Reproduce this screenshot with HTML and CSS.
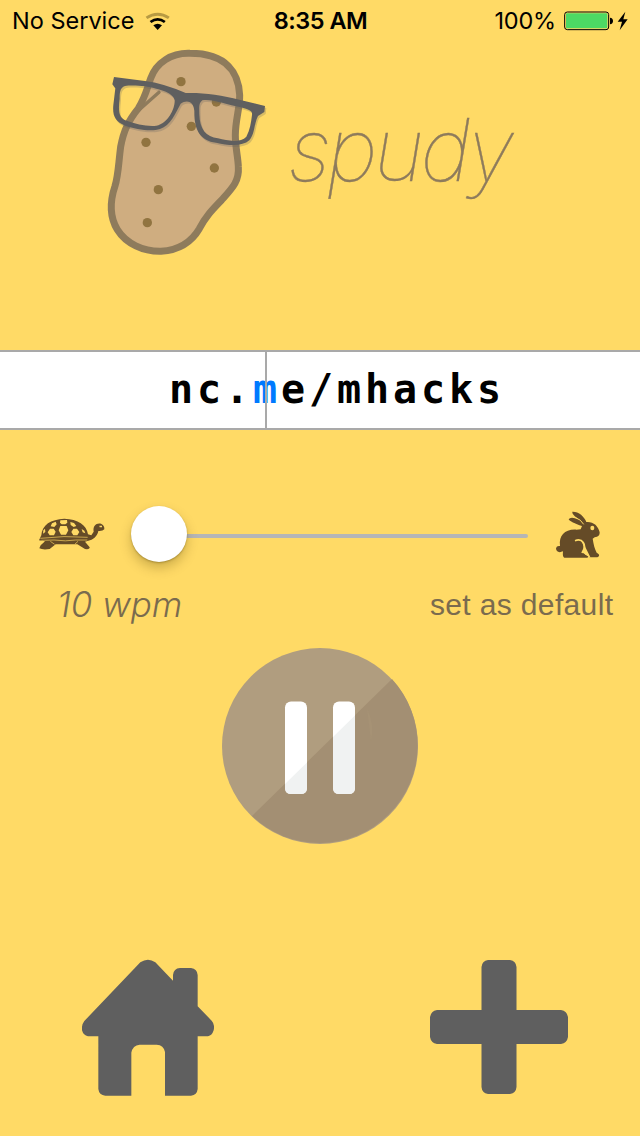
FILE: index.html
```html
<!DOCTYPE html>
<html lang="en">
<head>
<meta charset="utf-8">
<title>spudy</title>
<link rel="stylesheet" href="styles.css">
</head>
<body>
<main class="screen">
  <div class="status">
    <div class="status-left">
      <span class="carrier">No Service</span>
      <svg class="wifi" viewBox="0 0 75 57"><path d="M2 14Q38-9 74 14L69 21Q38 2 7 21Z" fill="#b79a42"/><path d="M14 27Q38 9 62 27L57 33Q38 20 19 33Z"/><path d="M25 40Q38 31 51 40L38 54Z"/></svg>
    </div>
    <span class="clock">8:35 AM</span>
    <div class="status-right">
      <span class="percent">100%</span>
      <svg class="battery" viewBox="0 0 195 60"><rect x="2" y="3" width="132" height="53" rx="8" fill="none" stroke="#000" stroke-width="3"/><rect x="6" y="7" width="124" height="45" rx="3" fill="#4cd964"/><path d="M138 20Q147 21 147 30Q147 39 138 40Z"/><path d="M184 2L161 32H174L167 58L191 25H178Z"/></svg>
    </div>
  </div>

  <header class="brand">
    <svg class="potato" viewBox="0 0 540 675">
      <path d="M285 40C230 38 184 67 167 115C154 151 152 168 130 205C100 242 86 272 77 320C70 375 70 405 60 438C44 486 44 531 67 569C93 611 145 635 198 634C250 630 288 609 313 566C334 527 352 509 380 480C412 444 433 424 430 380C429 350 421 323 421 286C421 240 435 203 434 165C431 101 397 40 285 40Z" fill="#cfad80" stroke="#8e7b5c" stroke-width="21"/>
      <path d="M192 157L132 210" stroke="#8e7b5c" stroke-width="10" stroke-linecap="round"/>
      <g fill="#917440"><circle cx="258" cy="125" r="14"/><circle cx="364" cy="186" r="14"/><circle cx="289" cy="259" r="14"/><circle cx="153" cy="307" r="14"/><circle cx="358" cy="384" r="14"/><circle cx="190" cy="449" r="14"/><circle cx="157" cy="548" r="14"/></g>
      <path class="frame-shadow" transform="translate(4 6)" fill-rule="evenodd" d="M57 111L150 123Q205 130 272 159C320 157 380 165 433 179L510 198L508 216L489 228C477 250 480 282 463 301C443 319 405 318 363 308C316 302 297 270 298 213C296 182 274 179 257 191C241 220 227 256 195 267C167 276 122 267 91 257C60 246 52 226 55 195L61 145L52 133ZM90 138C74 143 74 160 74 176C70 208 69 234 95 242C123 252 155 260 184 257C220 249 240 205 239 181C235 155 180 145 151 139C126 136 103 136 90 138ZM322 181C310 190 313 205 313 222C314 268 333 291 369 295C401 304 438 308 454 290C465 270 468 248 471 225C473 213 464 210 437 202C397 193 344 175 322 181Z"/>
      <path class="frame" fill-rule="evenodd" d="M57 111L150 123Q205 130 272 159C320 157 380 165 433 179L510 198L508 216L489 228C477 250 480 282 463 301C443 319 405 318 363 308C316 302 297 270 298 213C296 182 274 179 257 191C241 220 227 256 195 267C167 276 122 267 91 257C60 246 52 226 55 195L61 145L52 133ZM90 138C74 143 74 160 74 176C70 208 69 234 95 242C123 252 155 260 184 257C220 249 240 205 239 181C235 155 180 145 151 139C126 136 103 136 90 138ZM322 181C310 190 313 205 313 222C314 268 333 291 369 295C401 304 438 308 454 290C465 270 468 248 471 225C473 213 464 210 437 202C397 193 344 175 322 181Z"/>
    </svg>
    <h1 class="title">spudy</h1>
  </header>

  <section class="reader"><p class="word">nc.<span class="focus">m</span>e/mhacks</p></section>

  <section class="speed">
    <svg class="turtle" viewBox="0 0 228 138">
      <path fill="#654b27" d="M22 76C24 44 50 28 91 26C132 27 158 45 162 73L172 76L179 65C176 47 187 38 201 41Q212 46 211 58Q206 64 193 63C190 80 176 90 163 92L153 95L167 112Q168 119 153 117L130 103H65L47 117Q26 120 16 115L20 106L33 94L15 91Z"/>
      <g fill="#ffda66"><path d="M79 31L99 30L100 38L94 43H83L78 38ZM79 48H98L103 61L96 74H81L74 61ZM54 40L65 35L68 43L61 51L50 49ZM109 36L120 39L127 48L119 51L110 45ZM48 56H59L65 65L60 76H47L41 67ZM118 56H129L136 66L130 76H118L112 66Z"/><path d="M28 61L33 56L34 66L27 71ZM143 57L151 62L154 70L146 67ZM196 47L204 47V52H197Z"/></g>
      <path d="M19 85Q90 76 161 82M22 91L60 90Q96 95 125 90H160M49 94L62 103M132 94L121 104" fill="none" stroke="#dcb855" stroke-width="2.5"/>
    </svg>
    <div class="slider"><div class="track"></div><div class="thumb"></div></div>
    <svg class="rabbit" viewBox="0 0 168 174">
      <path fill="#654b27" d="M67 20C85 19 103 34 109 51C129 49 145 62 149 82Q150 95 134 97L128 101C131 119 134 132 140 143C151 148 149 156 139 157H119L105 132Q101 150 110 151Q120 157 111 158H43Q37 156 39 139C26 145 18 139 18 130Q20 121 30 123C26 91 45 72 79 74L92 73L96 63C75 57 58 48 56 43Q61 34 86 43C76 34 66 28 67 20Z"/>
      <ellipse cx="127" cy="69" rx="6" ry="7" fill="#ffda66"/>
      <path d="M75 107C98 98 110 120 99 138L96 144" fill="none" stroke="#ffda66" stroke-width="5"/>
      <path d="M98 110L122 158L108 150L98 143Q105 125 94 109Z" fill="#ffda66"/>
      <path d="M76 38Q93 43 101 58" fill="none" stroke="#ffda66" stroke-width="3"/>
    </svg>
  </section>
  <div class="labels"><span class="wpm">10 wpm</span><span class="default">set as default</span></div>

  <div class="playback">
    <svg class="pause" viewBox="0 0 196 196">
      <circle cx="98" cy="98" r="98" fill="#b09d7f"/>
      <path d="M30 168L170 31A98 98 0 0 1 30 168Z" fill="#a38f73"/>
      <path d="M145 60Q153 78 149 93Z" fill="#a69275"/>
      <rect x="63" y="53.500" width="22" height="92.500" rx="6" fill="#fff"/><rect x="111" y="53.500" width="22" height="92.500" rx="6" fill="#fff"/>
      <path d="M63 136L85 114.500V140Q85 146 79 146H69Q63 146 63 140ZM111 89L133 67.500V140Q133 146 127 146H117Q111 146 111 140Z" fill="#f0f2f2"/>
    </svg>
  </div>

  <nav class="actions">
    <svg class="home" viewBox="36 28 396 411"><path fill="#5f5f5f" d="M211 38Q234 22 256 38L309 93V76Q311 56 330 55H363Q382 58 383 76V170L425 213Q435 224 431 242Q426 258 414 260H383V418Q381 436 363 438H285V307Q281 286 260 285H209Q188 287 184 309V438H106Q87 436 85 418V260H54Q40 257 36 242Q34 226 43 214Z"/></svg>
    <svg class="plus" viewBox="0 0 138 134"><path fill="#5f5f5f" d="M58 0H80Q86 1 86.500 7V50H131Q137 51 138 57V77Q137 83 131 84H86.500V127Q86 133 80 134H58Q52 133 51.500 127V84H7Q1 83 0 77V57Q1 51 7 50H51.500V7Q52 1 58 0Z"/></svg>
  </nav>
</main>
</body>
</html>
```
FILE: styles.css
```css
* { box-sizing: border-box; }
body { margin: 0; }
.screen { width: 640px; height: 1136px; background: #ffda66; display: flex; flex-direction: column; overflow: hidden; font-family: "Liberation Sans", Arial, sans-serif; }
.status { height: 40px; padding: 2px 11px 0 12px; display: grid; grid-template-columns: 1fr auto 1fr; align-items: center; font-family: Inter, sans-serif; font-size: 23.5px; line-height: 38px; white-space: nowrap; color: #000; }
.status-left, .status-right { display: flex; align-items: center; }
.status-right { justify-content: flex-end; }
.carrier { letter-spacing: 0; }
.wifi { width: 25px; height: 19px; margin-left: 11px; }
.clock { font-weight: 600; letter-spacing: -.5px; }
.percent { letter-spacing: -.2px; }
.battery { width: 65px; height: 20px; margin-left: 8px; }

.brand { height: 310px; padding-left: 95px; display: flex; align-items: flex-start; }
.potato { width: 180px; height: 225px; flex: none; }
.frame { fill: #5f5f5f; }
.frame-shadow { fill: #5f5f5f; opacity: .25; }
.title { margin: 55px 0 0 13px; font: italic 100 87px/110px Inter, sans-serif; letter-spacing: -4px; color: #8e7b5c; -webkit-text-stroke: .4px #8e7b5c; }

.reader { height: 80px; flex: none; position: relative; border-top: 2px solid #a9a9a9; border-bottom: 2px solid #a9a9a9; background: #fff; padding-left: 169px; }
.reader::after { content: ""; position: absolute; left: 265px; top: 0; bottom: 0; width: 2px; background: #a9a9a9; }
.word { margin: 0; font: bold 40px/74px "DejaVu Sans Mono", monospace; letter-spacing: 3.920px; color: #000; white-space: pre; }
.focus { color: #007aff; }

.speed { height: 140px; flex: none; padding: 75px 0 0 34px; display: flex; align-items: flex-start; }
.turtle { width: 76px; height: 46px; margin-top: 5px; }
.slider { width: 397px; height: 58px; margin-left: 21px; display: grid; align-items: center; }
.track, .thumb { grid-area: 1 / 1; }
.track { height: 4px; margin-top: 4px; border-radius: 2px; background: #b6b6b6; }
.thumb { width: 56px; height: 56px; border-radius: 50%; background: #fff; box-shadow: 0 6px 12px rgba(80, 60, 0, .28), 0 1px 2px rgba(80, 60, 0, .35); }
.rabbit { width: 56px; height: 58px; margin-left: 22px; }
.labels { height: 70px; flex: none; padding: 12px 27px 0 57px; display: flex; justify-content: space-between; color: #7a6b4e; line-height: 44px; }
.wpm { font: italic 300 35px/44px Inter, sans-serif; letter-spacing: 0; }
.default { font-size: 30px; line-height: 46px; letter-spacing: .35px; margin-right: -.35px; }
.playback { height: 320px; flex: none; display: flex; justify-content: center; padding-top: 8px; }
.pause { width: 196px; height: 196px; }
.actions { padding: 0 72px 0 82px; display: flex; justify-content: space-between; align-items: flex-start; }
.home { width: 132px; height: 137px; margin-top: -1px; }
.plus { width: 138px; height: 134px; }
```
